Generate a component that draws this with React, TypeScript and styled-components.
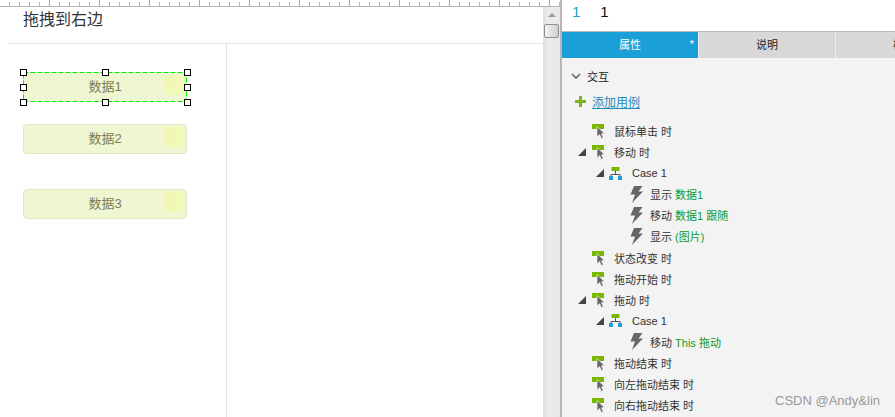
import React from 'react';
import styled, { createGlobalStyle } from 'styled-components';

const fontStack = '"Liberation Sans", "Noto Sans CJK SC", sans-serif';

const GlobalStyle = createGlobalStyle`
  html, body {
    margin: 0;
    padding: 0;
    background: #fff;
    overflow: hidden;
  }
  body {
    font-family: ${fontStack};
  }
`;

const Page = styled.div`
  position: relative;
  width: 895px;
  height: 417px;
  display: grid;
  grid-template-columns: 560px 2px 333px;
  overflow: hidden;
`;

const LeftSide = styled.div`
  display: flex;
  flex-direction: column;
  height: 417px;
  min-width: 0;
`;

const Ruler = styled.div`
  display: flex;
  height: 6px;
  flex: none;
  overflow: hidden;
  border-bottom: 1px solid #b4b4b4;
  background-image:
    repeating-linear-gradient(to right, transparent 0 49px, #a8a8a8 49px 50px),
    repeating-linear-gradient(to right, transparent 0 9px, #b4b4b4 9px 10px);
  background-size: 100% 6px, 100% 4px;
  background-position: 0 0, 0 2px;
  background-repeat: no-repeat;
`;

const RulerCell = styled.div`
  flex: none;
  width: 100px;
  padding-left: 3px;
  box-sizing: border-box;
  font-size: 10px;
  line-height: 10px;
  margin-top: -9px;
  height: 10px;
  color: #222;
`;

const Workspace = styled.div`
  flex: 1;
  display: grid;
  grid-template-columns: 543px 17px;
  min-height: 0;
`;

const Canvas = styled.div`
  display: flex;
  flex-direction: column;
  padding-left: 8px;
  background: #fff;
  min-width: 0;
`;

const Title = styled.div`
  height: 37px;
  flex: none;
  box-sizing: border-box;
  padding-left: 15px;
  font-size: 16px;
  line-height: 25px;
  color: #333;
  border-bottom: 1px solid #e2e2e2;
`;

const CanvasBody = styled.div`
  flex: 1;
  display: grid;
  grid-template-columns: 219px 1fr;
  min-height: 0;
`;

const DataColumn = styled.div`
  border-right: 1px solid #e2e2e2;
  padding: 28px 0 0 15px;
`;

const DataItem = styled.div<{ $top?: number; $selected?: boolean }>`
  position: relative;
  box-sizing: border-box;
  width: 164px;
  height: 30px;
  margin-top: ${(p) => p.$top ?? 0}px;
  background-color: #eef6d2;
  border: ${(p) => (p.$selected ? 'none' : '1px solid #e2e6c4')};
  border-radius: ${(p) => (p.$selected ? 0 : 4)}px;
  color: #7d7d55;
  font-size: 13px;
  line-height: ${(p) => (p.$selected ? 30 : 28)}px;
  text-align: center;
`;

const Swatch = styled.span<{ $selected?: boolean }>`
  position: absolute;
  top: ${(p) => (p.$selected ? 3 : 2)}px;
  right: ${(p) => (p.$selected ? 4 : 3)}px;
  width: 20px;
  height: 20px;
  background: #f1f7b6;
`;

const Marquee = styled.svg`
  position: absolute;
  left: 0;
  top: 0;
`;

const Handle = styled.span<{ $x: number; $y: number }>`
  position: absolute;
  left: calc(${(p) => p.$x}% - 3px);
  top: calc(${(p) => p.$y}% - 3px);
  box-sizing: border-box;
  width: 7px;
  height: 7px;
  background: #fff;
  border: 1px solid #000;
`;

const Scrollbar = styled.div`
  display: flex;
  flex-direction: column;
  align-items: center;
  background: linear-gradient(to right, #dedede, #ececec 30%, #e8e8e8);
`;

const ScrollArrow = styled.span`
  margin-top: 6px;
  width: 0;
  height: 0;
  border-left: 4px solid transparent;
  border-right: 4px solid transparent;
  border-bottom: 4px solid #9a9a9a;
`;

const ScrollThumb = styled.div`
  box-sizing: border-box;
  margin-top: 7px;
  width: 15px;
  height: 14px;
  border: 1px solid #8f8f8f;
  border-radius: 2px;
  background: linear-gradient(to right, #f4f4f4, #cfcfcf);
`;

const Splitter = styled.div`
  background: #b6b6b6;
`;

const Panel = styled.div`
  display: flex;
  flex-direction: column;
  background: #f3f3f3;
  min-width: 0;
  overflow: hidden;
`;

const Coordinates = styled.div`
  height: 31px;
  flex: none;
  display: flex;
  gap: 20px;
  padding-left: 10px;
  background: #fff;
  border-bottom: 1px solid #b8b8b8;
  font-size: 15px;
  line-height: 24px;
`;

const Coordinate = styled.span<{ $accent?: boolean }>`
  color: ${(p) => (p.$accent ? '#1a9fd8' : '#111')};
`;

const Tabs = styled.div`
  display: flex;
  flex: none;
  height: 26px;
  gap: 1px;
  background: #ececec;
`;

const Tab = styled.div<{ $active?: boolean }>`
  position: relative;
  flex: none;
  width: 136px;
  background: ${(p) => (p.$active ? '#1a9fd8' : '#d8d8d8')};
  color: ${(p) => (p.$active ? '#fff' : '#222')};
  font-size: 11px;
  line-height: 26px;
  text-align: center;
`;

const Dirty = styled.span`
  position: absolute;
  top: 0;
  right: 4px;
  font-size: 11px;
  line-height: 24px;
  color: #fff;
`;

const SectionHeader = styled.div`
  display: flex;
  align-items: center;
  height: 21px;
  margin-top: 7px;
  padding-left: 9px;
  gap: 6px;
  font-size: 11px;
  color: #222;
`;

const AddCase = styled.div`
  display: flex;
  align-items: center;
  height: 21px;
  margin-top: 5px;
  padding-left: 13px;
  gap: 6px;
`;

const AddLink = styled.a`
  font-size: 12px;
  color: #1c8dbd;
  text-decoration: underline;
`;

const Tree = styled.div`
  display: flex;
  flex-direction: column;
  margin-top: 8.4px;
`;

const Row = styled.div<{ $level: number }>`
  display: flex;
  align-items: center;
  height: 21.1px;
  flex: none;
  padding-left: ${(p) => 16 + p.$level * 18}px;
  font-size: 11px;
  color: #333;
  white-space: pre;
`;

const ToggleSlot = styled.span`
  flex: none;
  width: 13px;
  display: flex;
  align-items: center;
`;

const IconSlot = styled.span`
  flex: none;
  width: 23px;
  display: flex;
  align-items: center;
`;

const Target = styled.span`
  color: #0c9a2e;
`;

const Watermark = styled.div`
  position: absolute;
  right: 15px;
  bottom: 8px;
  font-size: 13px;
  line-height: 16px;
  color: #999;
`;

const Toggle = () => (
  <svg width="8" height="8" viewBox="0 0 8 8">
    <path d="M8 0V8H0Z" fill="#444" />
  </svg>
);

const EventIcon = () => (
  <svg width="15" height="16" viewBox="-1 0 15 16">
    <rect x="0" y="1" width="12" height="5" fill="#7ab800" />
    <path
      d="M5 3.500L12.500 10.500L9.500 10.800L11.300 14.500L9.300 15.500L7.600 11.600L5 14Z"
      fill="#666"
      stroke="#f3f3f3"
      strokeWidth=".7"
    />
  </svg>
);

const CaseIcon = () => (
  <svg width="13" height="13" viewBox="0 0 13 13">
    <rect x="2.500" y="0" width="8" height="4" fill="#7ab800" />
    <path d="M6.500 4V7M2 10V7.500H11V10" fill="none" stroke="#555" strokeWidth="1" />
    <rect x="0" y="9" width="4" height="4" fill="#1a9fd8" />
    <rect x="9" y="9" width="4" height="4" fill="#1a9fd8" />
  </svg>
);

const ActionIcon = () => (
  <svg width="16" height="17" viewBox="-3 0 16 17">
    <path d="M4 0H12.500L8.500 5.500H13L2 17L5 8.500H0.500Z" fill="#666" />
  </svg>
);

const Chevron = () => (
  <svg width="10" height="6" viewBox="0 0 10 6">
    <path d="M1 1L5 5L9 1" fill="none" stroke="#666" strokeWidth="1.600" />
  </svg>
);

const Plus = () => (
  <svg width="11" height="11" viewBox="0 0 11 11">
    <path d="M4 0H7V4H11V7H7V11H4V7H0V4H4Z" fill="#7ab51d" />
  </svg>
);

type Node = {
  kind: 'event' | 'case' | 'action';
  level: number;
  open?: boolean;
  text: string;
  target?: string;
};

const nodes: Node[] = [
  { kind: 'event', level: 0, text: '鼠标单击 时' },
  { kind: 'event', level: 0, open: true, text: '移动 时' },
  { kind: 'case', level: 1, open: true, text: 'Case 1' },
  { kind: 'action', level: 2, text: '显示 ', target: '数据1' },
  { kind: 'action', level: 2, text: '移动 ', target: '数据1 跟随' },
  { kind: 'action', level: 2, text: '显示 ', target: '(图片)' },
  { kind: 'event', level: 0, text: '状态改变 时' },
  { kind: 'event', level: 0, text: '拖动开始 时' },
  { kind: 'event', level: 0, open: true, text: '拖动 时' },
  { kind: 'case', level: 1, open: true, text: 'Case 1' },
  { kind: 'action', level: 2, text: '移动 ', target: 'This 拖动' },
  { kind: 'event', level: 0, text: '拖动结束 时' },
  { kind: 'event', level: 0, text: '向左拖动结束 时' },
  { kind: 'event', level: 0, text: '向右拖动结束 时' },
];

const icons = { event: EventIcon, case: CaseIcon, action: ActionIcon };

const handles = [
  [0, 0], [50, 0], [100, 0],
  [0, 50], [100, 50],
  [0, 100], [50, 100], [100, 100],
];

const App = () => {
  return (
    <Page>
      <GlobalStyle />
      <LeftSide>
        <Ruler>
          {['0', '100', '200', '300', '400', '500'].map((label) => (
            <RulerCell key={label}>{label}</RulerCell>
          ))}
        </Ruler>
        <Workspace>
          <Canvas>
            <Title>拖拽到右边</Title>
            <CanvasBody>
              <DataColumn>
                <DataItem $selected>
                  数据1
                  <Swatch $selected />
                  <Marquee width="164" height="30" viewBox="0 0 164 30">
                    <rect x=".5" y=".5" width="163" height="29" fill="none" stroke="#00f000" strokeDasharray="5 2" />
                  </Marquee>
                  {handles.map(([x, y]) => (
                    <Handle key={`${x}-${y}`} $x={x} $y={y} />
                  ))}
                </DataItem>
                <DataItem $top={22}>
                  数据2
                  <Swatch />
                </DataItem>
                <DataItem $top={35}>
                  数据3
                  <Swatch />
                </DataItem>
              </DataColumn>
              <div />
            </CanvasBody>
          </Canvas>
          <Scrollbar>
            <ScrollArrow />
            <ScrollThumb />
          </Scrollbar>
        </Workspace>
      </LeftSide>
      <Splitter />
      <Panel>
        <Coordinates>
          <Coordinate $accent>1</Coordinate>
          <Coordinate>1</Coordinate>
        </Coordinates>
        <Tabs>
          <Tab $active>
            属性
            <Dirty>*</Dirty>
          </Tab>
          <Tab>说明</Tab>
          <Tab>样式</Tab>
        </Tabs>
        <SectionHeader>
          <Chevron />
          交互
        </SectionHeader>
        <AddCase>
          <Plus />
          <AddLink>添加用例</AddLink>
        </AddCase>
        <Tree>
          {nodes.map((node, i) => {
            const Icon = icons[node.kind];
            return (
              <Row key={i} $level={node.level}>
                <ToggleSlot>{node.open && <Toggle />}</ToggleSlot>
                <IconSlot>
                  <Icon />
                </IconSlot>
                {node.text}
                {node.target && <Target>{node.target}</Target>}
              </Row>
            );
          })}
        </Tree>
      </Panel>
      <Watermark>CSDN @Andy&amp;lin</Watermark>
    </Page>
  );
};

export default App;
